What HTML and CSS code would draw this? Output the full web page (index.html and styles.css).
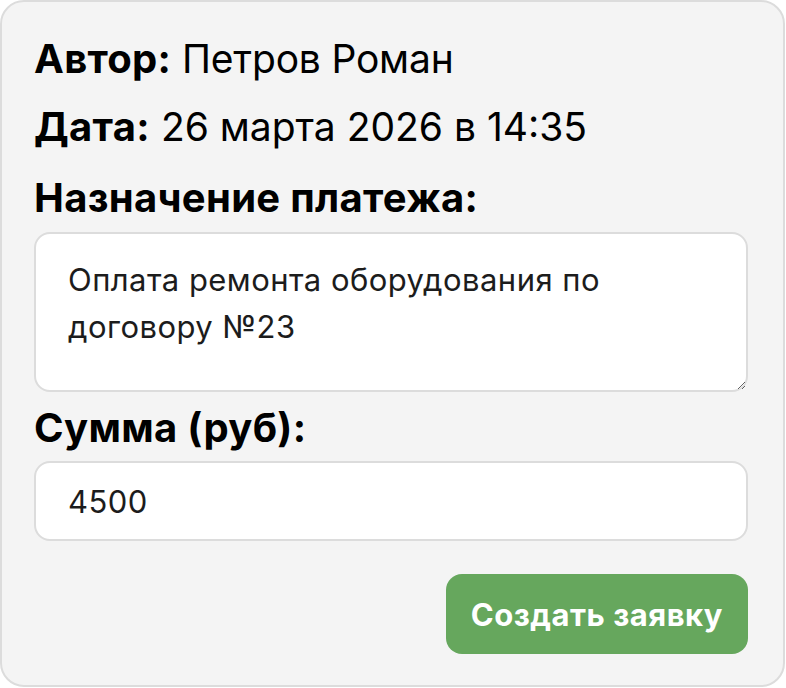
FILE: index.html
```html
<!DOCTYPE html>
<html lang="ru">
<head>
<meta charset="utf-8">
<title>Заявка</title>
<link rel="stylesheet" href="styles.css">
</head>
<body>
<form class="card">
  <p class="meta meta-author"><strong>Автор:</strong> Петров Роман</p>
  <p class="meta meta-date"><strong>Дата:</strong> 26 марта 2026 в 14:35</p>
  <label class="label label-purpose" for="purpose">Назначение платежа:</label>
  <textarea id="purpose" class="field area">Оплата ремонта оборудования по договору №23</textarea>
  <label class="label label-sum" for="sum">Сумма (руб):</label>
  <input id="sum" class="field line" type="text" value="4500">
  <div class="actions">
    <button type="button" class="btn">Создать заявку</button>
  </div>
</form>
</body>
</html>
```
FILE: styles.css
```css
html, body {
  margin: 0;
  padding: 0;
  background: #ffffff;
}
body {
  font-family: "Inter", "Noto Sans", sans-serif;
  color: #000;
}
.card {
  box-sizing: border-box;
  width: 785px;
  height: 687px;
  background: #f4f4f4;
  border: 2px solid #dcdcdc;
  border-radius: 24px;
  padding: 35px 35px 0 32px;
  display: flex;
  flex-direction: column;
}
.meta {
  margin: 0;
  font-size: 39px;
  line-height: 44px;
  font-weight: 400;
  color: #000;
}
.meta strong {
  font-size: 40px;
  font-weight: 700;
  letter-spacing: 0.3px;
}
.meta-author {
  letter-spacing: -0.2px;
}
.meta-date {
  margin-top: 24px;
}
.label {
  display: block;
  font-size: 40px;
  line-height: 44px;
  font-weight: 700;
  letter-spacing: 0.3px;
}
.label-purpose {
  margin-top: 27px;
}
.label-sum {
  margin-top: 14px;
}
.field {
  box-sizing: border-box;
  width: 100%;
  background: #ffffff;
  border: 2px solid #dcdcdc;
  border-radius: 16px;
  font-family: "Inter", "Noto Sans", sans-serif;
  font-size: 31px;
  letter-spacing: 0.45px;
  color: #1c1c1c;
  outline: none;
  margin: 0;
}
.area {
  margin-top: 12px;
  height: 160px;
  padding: 22px 32px 0 32px;
  line-height: 47px;
  resize: vertical;
  display: block;
}
.line {
  margin-top: 11px;
  height: 80px;
  padding: 0 32px;
  display: block;
}
.actions {
  display: flex;
  justify-content: flex-end;
  margin-top: 33px;
}
.btn {
  height: 80px;
  padding: 0 25px;
  background: #66a75d;
  color: #ffffff;
  border: none;
  border-radius: 16px;
  font-family: "Inter", "Noto Sans", sans-serif;
  font-size: 31px;
  font-weight: 700;
  letter-spacing: 0.5px;
  cursor: pointer;
}
```
